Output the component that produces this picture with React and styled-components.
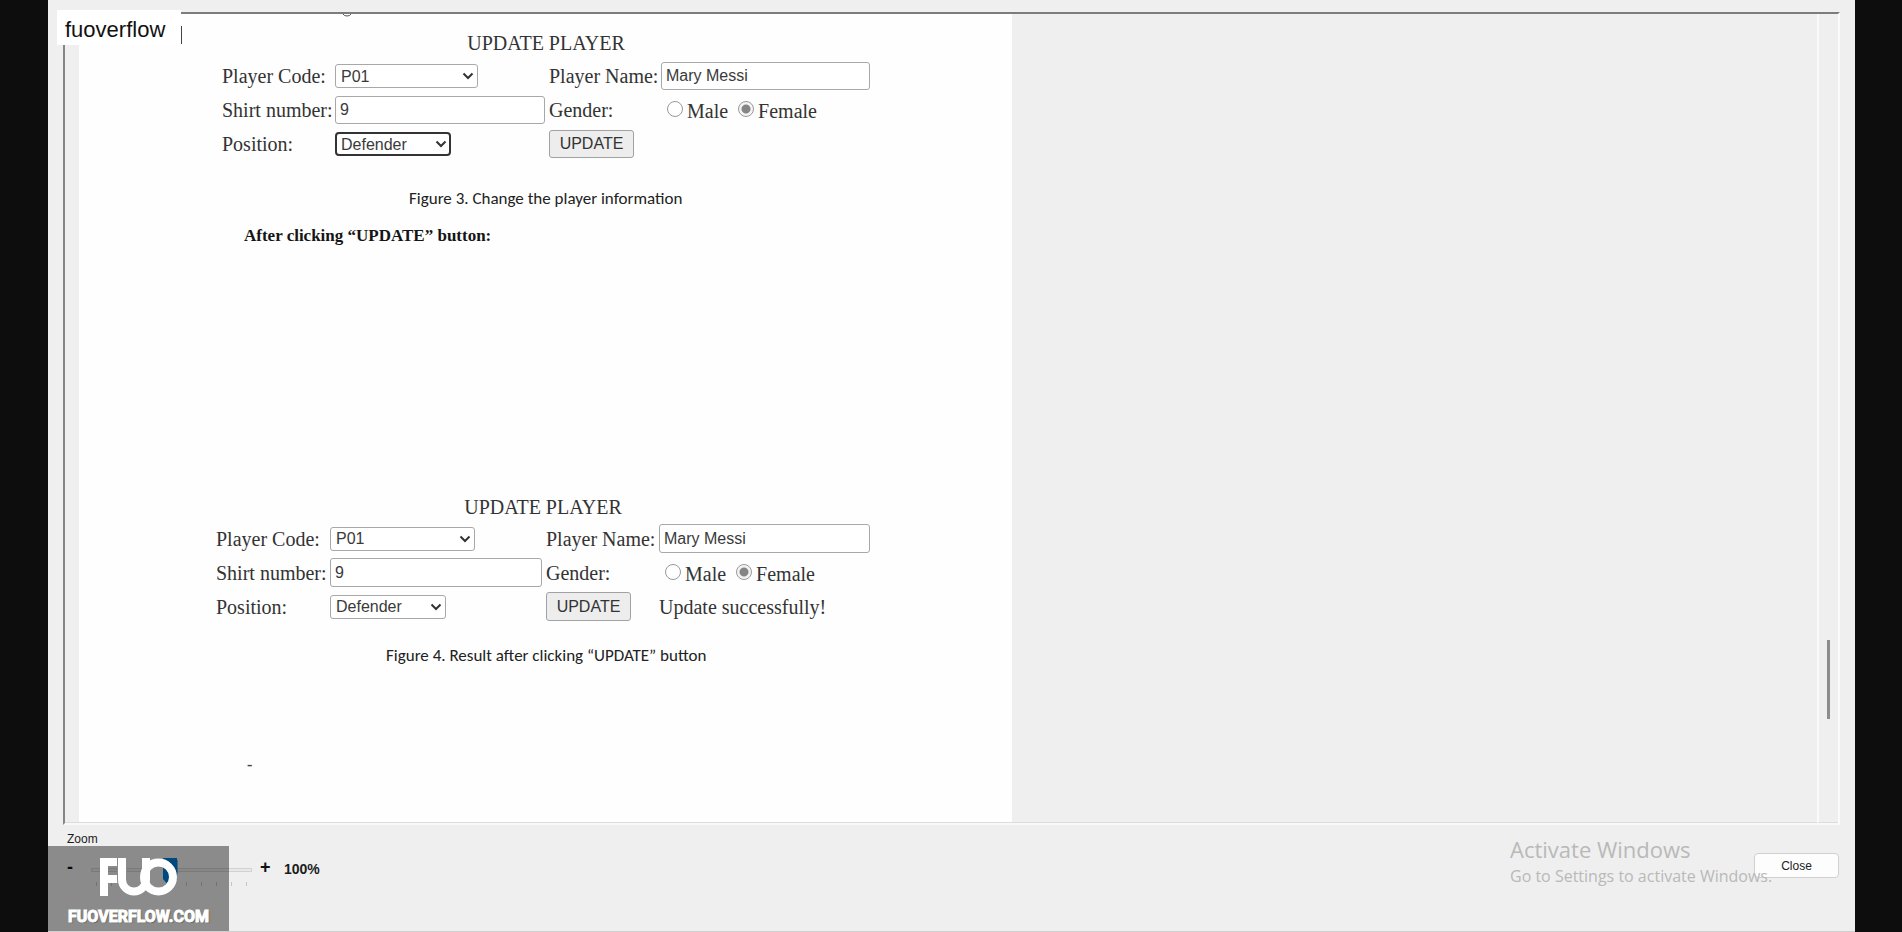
import React from "react";
import styled, { createGlobalStyle } from "styled-components";

const GlobalStyle = createGlobalStyle`
  * { box-sizing: border-box; }
  body { margin: 0; background: #0d0d0d; font-family: "Liberation Sans", Arial, sans-serif; }
`;

const Window = styled.div`
  position: relative;
  display: flex;
  flex-direction: column;
  min-height: 100vh;
  margin: 0 47px 0 48px;
  padding: 12px 15px 0;
  background: #efefef;
  border-bottom: 1px solid #cfcfcf;
`;

const Viewer = styled.main`
  display: flex;
  flex: 1;
  border-left: 2px solid #868686;
  border-top: 2px solid #7c7c7c;
  border-right: 2px solid #fbfbfb;
  border-bottom: 2px solid #f8f8f8;
`;

const Canvas = styled.div`
  display: flex;
  flex: 1;
  padding-left: 14px;
  border-bottom: 1px solid #dcdcdc;
`;

const Paper = styled.article`
  display: flex;
  flex-direction: column;
  flex: 0 0 933px;
  background: #fefefe;
`;

const ScrollTrack = styled.div`
  width: 21px;
  padding: 626px 0 0 8px;
  border-left: 2px solid #fafafa;
  border-bottom: 1px solid #dcdcdc;
`;

const ScrollThumb = styled.div`
  width: 3px;
  height: 79px;
  background: #8c8c8c;
`;

const LineEnd = styled.svg`
  display: block;
  margin: 0 0 13px 264px;
`;

const Form = styled.form`
  display: grid;
  grid-template-columns: ${(p) => (p.$large ? "110px 212px 109px 211px" : "109px 210px 108px 209px")};
  grid-template-rows: ${(p) => (p.$large ? "24px repeat(3, 29px)" : "26px repeat(3, 28px)")};
  gap: ${(p) => (p.$large ? 5 : 6)}px 4px;
  align-items: center;
  margin-left: ${(p) => (p.$large ? 137 : 143)}px;
  font: 20px/24px "Liberation Serif", "Times New Roman", serif;
  color: #333;
  white-space: nowrap;
`;

const FormTitle = styled.h2`
  grid-column: 1 / -1;
  margin: 0;
  font: inherit;
  text-align: center;
`;

const TextInput = styled.input`
  width: 100%;
  height: 100%;
  padding: 0 4px;
  border: 1px solid #a8a8a8;
  border-radius: 3px;
  background: #fff;
  color: #3a3a3a;
  font: 16px "Liberation Sans", Arial, sans-serif;
`;

const SelectBox = styled.div`
  position: relative;
  width: ${(p) => p.$width}px;
  svg {
    position: absolute;
    right: 4px;
    top: 8px;
    pointer-events: none;
  }
`;

const Select = styled.select`
  display: block;
  appearance: none;
  width: 100%;
  height: 24px;
  padding: 0 ${(p) => (p.$focused ? 4 : 5)}px;
  border: ${(p) => (p.$focused ? "2px solid #333" : "1px solid #a8a8a8")};
  border-radius: ${(p) => (p.$focused ? 4 : 3)}px;
  background: #fff;
  color: #3a3a3a;
  font: 16px "Liberation Sans", Arial, sans-serif;
`;

const RadioRow = styled.div`
  display: flex;
  align-items: center;
  padding: 2px 0 0 6px;
`;

const RadioLabel = styled.label`
  display: flex;
  align-items: center;
  gap: 4px;
  margin-right: 10px;
`;

const Radio = styled.input`
  appearance: none;
  width: 16px;
  height: 16px;
  margin: 0 0 4px;
  border: 1px solid #999;
  border-radius: 50%;
  background: #fff;
  &:checked {
    background: radial-gradient(circle, #858585 0 4px, #f4f4f4 5px);
  }
`;

const UpdateButton = styled.button`
  justify-self: start;
  width: 85px;
  height: 100%;
  padding: 0;
  border: 1px solid #a2a2a2;
  border-radius: 3px;
  background: #ededed;
  color: #333;
  font: 16px "Liberation Sans", Arial, sans-serif;
`;

const Caption = styled.p`
  margin: ${(p) => p.$top}px 0 0 ${(p) => p.$left}px;
  font: 17px/20px Carlito, Lato, sans-serif;
  color: #222;
`;

const StepHeading = styled.h3`
  margin: 17px 0 249px 165px;
  font: 700 17px/20px "Liberation Serif", "Times New Roman", serif;
  color: #151515;
`;

const Dash = styled.span`
  margin: 89px 0 40px 168px;
  font: 700 16px/20px "Liberation Serif", serif;
  color: #444;
`;

const Footer = styled.footer`
  display: flex;
  justify-content: space-between;
  align-items: flex-start;
  height: 106px;
`;

const ZoomPanel = styled.div`
  padding: 6px 0 0 4px;
  color: #1c1c1c;
`;

const ZoomTitle = styled.label`
  display: block;
  font-size: 12px;
  line-height: 16px;
`;

const ZoomRow = styled.div`
  display: flex;
  align-items: flex-start;
  padding-top: 8px;
`;

const StepButton = styled.button`
  width: ${(p) => p.$width}px;
  height: 24px;
  padding: 0;
  border: 0;
  background: none;
  color: #111;
  text-align: left;
  font: 700 18px/24px "Liberation Sans", Arial, sans-serif;
`;

const SliderColumn = styled.div`
  width: 161px;
  margin-right: 8px;
`;

const Slider = styled.input`
  appearance: none;
  display: block;
  width: 100%;
  height: 24px;
  margin: 3px 0 0;
  background: none;
  &::-webkit-slider-runnable-track {
    height: 4px;
    border: 1px solid #d2d2d2;
    background: #e8e8e8;
  }
  &::-webkit-slider-thumb {
    appearance: none;
    width: 12px;
    height: 20px;
    margin-top: -9px;
    background: #0078c8;
    clip-path: polygon(0 0, 100% 0, 100% 70%, 50% 100%, 0 70%);
  }
`;

const Ticks = styled.div`
  display: flex;
  justify-content: space-between;
  padding: 0 5px;
  i {
    width: 1px;
    height: 4px;
    background: #c4c4c4;
  }
`;

const ZoomValue = styled.output`
  padding-left: 6px;
  font: 700 14px/28px "Liberation Sans", Arial, sans-serif;
`;

const CloseButton = styled.button`
  width: 85px;
  height: 25px;
  margin: 28px 1px 0 0;
  padding: 0;
  border: 1px solid #d0d0d0;
  border-radius: 4px;
  background: #fdfdfd;
  color: #222;
  font: 12px "Liberation Sans", Arial, sans-serif;
`;

const NameTag = styled.div`
  position: absolute;
  left: 9px;
  top: 10px;
  width: 124px;
  height: 35px;
  padding-left: 8px;
  background: #fff;
  color: #111;
  font-size: 22px;
  line-height: 39px;
  &::after {
    content: "";
    position: absolute;
    right: -1px;
    top: 16px;
    width: 1px;
    height: 18px;
    background: #444;
  }
`;

const Brand = styled.div`
  position: absolute;
  left: 0;
  bottom: 0;
  display: flex;
  flex-direction: column;
  align-items: center;
  width: 181px;
  height: 85px;
  padding-top: 12px;
  background: rgba(0, 0, 0, 0.42);
  color: #fff;
  pointer-events: none;
`;

const BrandName = styled.div`
  margin-top: 9px;
  font: 700 16px/24px "Liberation Sans Narrow", "Roboto", sans-serif;
  text-shadow: 1px 1px 1px #555;
  -webkit-text-stroke: 1px #fff;
`;

const Watermark = styled.div`
  position: absolute;
  right: 80px;
  bottom: 43px;
  width: 265px;
  color: #b9b9b9;
  font-family: "Open Sans", "Noto Sans", sans-serif;
  white-space: nowrap;
  pointer-events: none;
`;

const WatermarkTitle = styled.div`
  font-size: 22px;
  line-height: 30px;
`;

const WatermarkText = styled.div`
  font-size: 16px;
  line-height: 24px;
`;

function Dropdown({ id, value, width, focused }) {
  return (
    <SelectBox $width={width}>
      <Select id={id} defaultValue={value} $focused={focused}>
        <option>{value}</option>
      </Select>
      <svg width="12" height="9" viewBox="0 0 12 9" fill="none" stroke="#333" strokeWidth="2">
        <path d="M1.500 1.500 6 6l4.500-4.500" />
      </svg>
    </SelectBox>
  );
}

function PlayerForm({ id, large, focused, message }) {
  return (
    <Form $large={large} onSubmit={(e) => e.preventDefault()}>
      <FormTitle>UPDATE PLAYER</FormTitle>
      <label htmlFor={`${id}-code`}>Player Code:</label>
      <Dropdown id={`${id}-code`} value="P01" width={large ? 145 : 143} />
      <label htmlFor={`${id}-name`}>Player Name:</label>
      <TextInput id={`${id}-name`} defaultValue="Mary Messi" />
      <label htmlFor={`${id}-shirt`}>Shirt number:</label>
      <TextInput id={`${id}-shirt`} defaultValue="9" />
      <span>Gender:</span>
      <RadioRow role="radiogroup" aria-label="Gender">
        <RadioLabel>
          <Radio type="radio" name={`${id}-gender`} />
          Male
        </RadioLabel>
        <RadioLabel>
          <Radio type="radio" name={`${id}-gender`} defaultChecked />
          Female
        </RadioLabel>
      </RadioRow>
      <label htmlFor={`${id}-position`}>Position:</label>
      <Dropdown id={`${id}-position`} value="Defender" width={116} focused={focused} />
      <UpdateButton>UPDATE</UpdateButton>
      {message && <span>{message}</span>}
    </Form>
  );
}

function Logo() {
  return (
    <svg width="77" height="38" viewBox="0 0 77 38" fill="none" stroke="#fff" strokeWidth="8">
      <rect x="48" y="8" width="22" height="22" fill="#8b8b8b" stroke="none" />
      <path d="M63 0h14v21l-7 8-7-8z" fill="#00497c" stroke="none" />
      <path d="M4 38V4h16M4 21h14" />
      <path d="M22 0v21.500a12 12 0 0 0 24 0V0" stroke="#8b8b8b" strokeWidth="10" />
      <path d="M22 0v21.500a12 12 0 0 0 24 0V0" />
      <path d="M47 8a16 18 0 0 0 0 22" stroke="#a2a2a2" strokeWidth="2" />
      <circle cx="58.500" cy="19" r="14.500" />
    </svg>
  );
}

export default function App() {
  return (
    <>
      <GlobalStyle />
      <Window>
        <Viewer>
          <Canvas>
            <Paper>
              <LineEnd width="8" height="3" viewBox="0 0 8 3" fill="none" stroke="#555">
                <path d="M0 0q1 2 4 2t4-2" />
              </LineEnd>
              <PlayerForm id="before" focused />
              <Caption $top={31} $left={330}>Figure 3. Change the player information</Caption>
              <StepHeading>After clicking “UPDATE” button:</StepHeading>
              <PlayerForm id="after" large message="Update successfully!" />
              <Caption $top={25} $left={307}>Figure 4. Result after clicking “UPDATE” button</Caption>
              <Dash>-</Dash>
            </Paper>
          </Canvas>
          <ScrollTrack>
            <ScrollThumb />
          </ScrollTrack>
        </Viewer>
        <Footer>
          <ZoomPanel>
            <ZoomTitle htmlFor="zoom">Zoom</ZoomTitle>
            <ZoomRow>
              <StepButton $width={24} aria-label="Zoom out">-</StepButton>
              <SliderColumn>
                <Slider id="zoom" type="range" min="0" max="200" defaultValue="100" />
                <Ticks>
                  {Array.from({ length: 11 }, (_, i) => (
                    <i key={i} />
                  ))}
                </Ticks>
              </SliderColumn>
              <StepButton $width={18} aria-label="Zoom in">+</StepButton>
              <ZoomValue>100%</ZoomValue>
            </ZoomRow>
          </ZoomPanel>
          <CloseButton>Close</CloseButton>
        </Footer>
        <NameTag>fuoverflow</NameTag>
        <Brand>
          <Logo />
          <BrandName>FUOVERFLOW.COM</BrandName>
        </Brand>
        <Watermark>
          <WatermarkTitle>Activate Windows</WatermarkTitle>
          <WatermarkText>Go to Settings to activate Windows.</WatermarkText>
        </Watermark>
      </Window>
    </>
  );
}
